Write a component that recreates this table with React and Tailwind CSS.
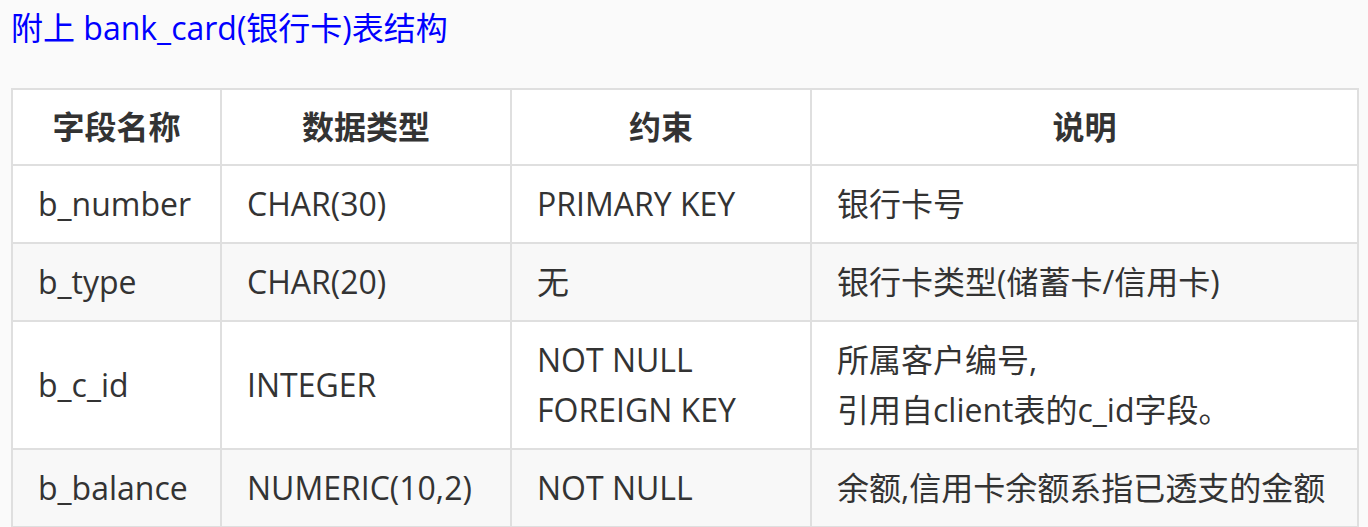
const rows = [
  { name: 'b_number', type: 'CHAR(30)', cons: ['PRIMARY KEY'], desc: ['银行卡号'] },
  { name: 'b_type', type: 'CHAR(20)', cons: ['无'], desc: ['银行卡类型(储蓄卡/信用卡)'] },
  { name: 'b_c_id', type: 'INTEGER', cons: ['NOT NULL', 'FOREIGN KEY'], desc: ['所属客户编号,', '引用自client表的c_id字段。'] },
  { name: 'b_balance', type: 'NUMERIC(10,2)', cons: ['NOT NULL'], desc: ['余额,信用卡余额系指已透支的金额'] },
]

export default function App() {
  return (
    <div
      className="min-h-screen bg-[#fafafa] text-[#333] pl-[11px] pt-[6px]"
      style={{ fontFamily: '"Open Sans", "Noto Sans CJK SC", sans-serif' }}
    >
      <h3 className="text-[32px] leading-[44px] text-[#0000ff] font-normal">附上 bank_card(银行卡)表结构</h3>

      <table className="mt-[38px] table-fixed border-collapse text-[32px] leading-[50px] w-[1346px]">
        <colgroup>
          <col className="w-[209px]" />
          <col className="w-[290px]" />
          <col className="w-[300px]" />
          <col className="w-[547px]" />
        </colgroup>
        <thead>
          <tr className="bg-white">
            <th className="border-2 border-[#dfdfdf] py-[12px] font-bold">字段名称</th>
            <th className="border-2 border-[#dfdfdf] py-[12px] font-bold">数据类型</th>
            <th className="border-2 border-[#dfdfdf] py-[12px] font-bold">约束</th>
            <th className="border-2 border-[#dfdfdf] py-[12px] font-bold">说明</th>
          </tr>
        </thead>
        <tbody>
          {rows.map((r, i) => (
            <tr key={r.name} className={i % 2 === 1 ? 'bg-[#f8f8f8]' : 'bg-white'}>
              <td className="border-2 border-[#dfdfdf] px-[25px] py-[13px] whitespace-nowrap">{r.name}</td>
              <td className="border-2 border-[#dfdfdf] px-[25px] py-[13px] whitespace-nowrap">{r.type}</td>
              <td className="border-2 border-[#dfdfdf] px-[25px] py-[13px] whitespace-nowrap">
                {r.cons.map((c) => (
                  <div key={c}>{c}</div>
                ))}
              </td>
              <td className="border-2 border-[#dfdfdf] px-[25px] py-[13px] whitespace-nowrap">
                {r.desc.map((d) => (
                  <div key={d}>{d}</div>
                ))}
              </td>
            </tr>
          ))}
        </tbody>
      </table>
    </div>
  )
}
